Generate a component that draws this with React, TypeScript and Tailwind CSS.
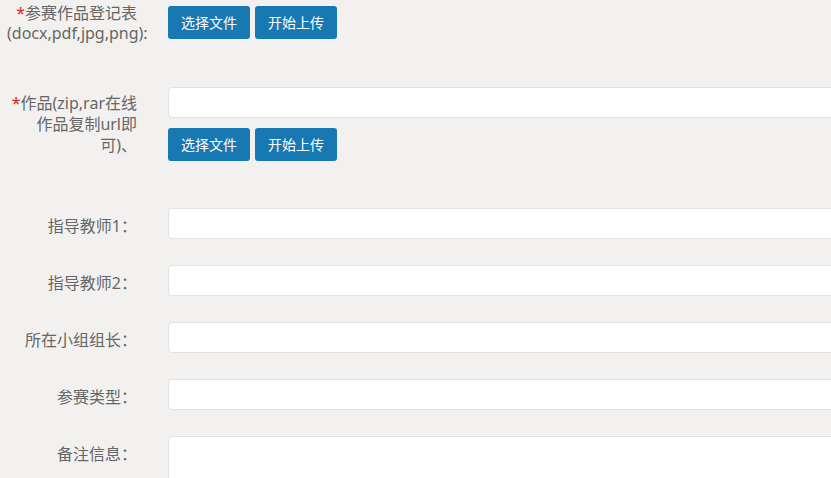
import React from "react";

const font = { fontFamily: '"Noto Sans", "Noto Sans CJK SC", sans-serif' };

function Buttons() {
  return (
    <div className="flex gap-[5px]">
      <button className="h-[33px] w-[82px] rounded-[3px] bg-[#1778b2] text-[14px] text-white leading-[33px]">
        选择文件
      </button>
      <button className="h-[33px] w-[82px] rounded-[3px] bg-[#1778b2] text-[14px] text-white leading-[33px]">
        开始上传
      </button>
    </div>
  );
}

function Field({ label, tall }: { label: string; tall?: boolean }) {
  return (
    <div className="flex mb-[26px]">
      <div className="ml-[7px] w-[130px] shrink-0 pt-[8px] text-right text-[16px] leading-[21px] text-[#666]">
        {label}
      </div>
      <div className="ml-[31px] shrink-0">
        <div
          className={
            tall
              ? "h-[80px] w-[700px] rounded-[4px] border border-[#e2e2e0] bg-white"
              : "h-[31px] w-[700px] rounded-[4px] border border-[#e2e2e0] bg-white"
          }
        />
      </div>
    </div>
  );
}

export default function App() {
  return (
    <div className="h-[478px] w-full overflow-hidden bg-[#f2f1ef]" style={font}>
      {/* Row 1 */}
      <div className="flex">
        <div className="ml-[7px] w-[130px] shrink-0 pt-[3px] text-right text-[16px] leading-[20px] text-[#666]">
          <span className="text-[#e02020]">*</span>参赛作品登记表 (docx,pdf,jpg,png):
        </div>
        <div className="ml-[31px] shrink-0 pt-[6px]">
          <Buttons />
        </div>
      </div>

      {/* Row 2 */}
      <div className="mt-[44px] flex">
        <div className="ml-[7px] w-[130px] shrink-0 pt-[6px] text-right text-[16px] leading-[21px] text-[#666]">
          <span className="text-[#e02020]">*</span>作品(zip,rar在线
          <br />
          作品复制url即
          <br />
          可)、
        </div>
        <div className="ml-[31px] shrink-0">
          <div className="h-[31px] w-[700px] rounded-[4px] border border-[#e2e2e0] bg-white" />
          <div className="mt-[10px]">
            <Buttons />
          </div>
        </div>
      </div>

      <div className="mt-[47px]">
        <Field label="指导教师1：" />
        <Field label="指导教师2：" />
        <Field label="所在小组组长：" />
        <Field label="参赛类型：" />
        <Field label="备注信息：" tall />
      </div>
    </div>
  );
}
